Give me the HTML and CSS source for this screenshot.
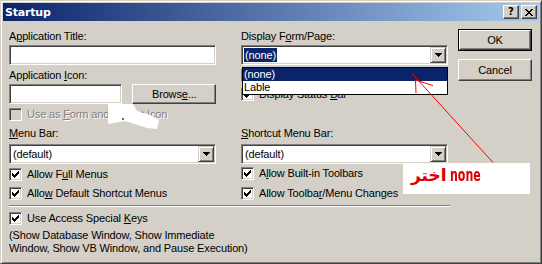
FILE: index.html
```html
<!DOCTYPE html>
<html>
<head>
<meta charset="utf-8">
<link rel="stylesheet" href="styles.css">
</head>
<body>
<div class="window">
  <div class="titlebar">
    <span class="title">Startup</span>
    <div class="tb-buttons">
      <span class="tb-btn tb-help">?</span>
      <span class="tb-btn"><svg width="8" height="7" viewBox="0 0 8 7" shape-rendering="crispEdges"><path d="M0 0h2v1h-2z M6 0h2v1h-2z M1 1h2v1h-2z M5 1h2v1h-2z M2 2h4v1h-4z M3 3h2v1h-2z M2 4h4v1h-4z M1 5h2v1h-2z M5 5h2v1h-2z M0 6h2v1h-2z M6 6h2v1h-2z" fill="#000"/></svg></span>
    </div>
  </div>
  <div class="client">
    <div class="main">
      <div class="cols">
        <div class="col">
          <div class="lbl">A<u>p</u>plication Title:</div>
          <div class="textbox mt2"></div>
          <div class="lbl mt4">Application <u>I</u>con:</div>
          <div class="iconrow mt2">
            <div class="textbox icon"></div>
            <div class="btn browse">Brows<u>e</u>...</div>
          </div>
          <div class="check disabled mt4"><span class="box"></span><span class="ctext">Use as <u>F</u>orm and Report Icon</span></div>
          <div class="lbl mt6"><u>M</u>enu Bar:</div>
          <div class="combo mt4"><span class="ctext-val">(default)</span><span class="dd"><svg width="7" height="4" viewBox="0 0 7 4" shape-rendering="crispEdges"><path d="M0 0h7v1h-1v1h-1v1h-1v1h-1v-1h-1v-1h-1v-1h-1z"/></svg></span></div>
          <div class="check mt4"><span class="box"><svg class="tick" width="7" height="7" viewBox="0 0 7 7" shape-rendering="crispEdges"><path d="M0 2h1v1h1v1h1v-1h1v-1h1v-1h1v-1h1v3h-1v1h-1v1h-1v1h-1v1h-1v-1h-1v-1h-1v-1h-1z"/></svg></span><span class="ctext">Allow F<u>u</u>ll Menus</span></div>
          <div class="check mt6"><span class="box"><svg class="tick" width="7" height="7" viewBox="0 0 7 7" shape-rendering="crispEdges"><path d="M0 2h1v1h1v1h1v-1h1v-1h1v-1h1v-1h1v3h-1v1h-1v1h-1v1h-1v1h-1v-1h-1v-1h-1v-1h-1z"/></svg></span><span class="ctext">Allo<u>w</u> Default Shortcut Menus</span></div>
        </div>
        <div class="col">
          <div class="lbl">Display F<u>o</u>rm/Page:</div>
          <div class="combo-wrap mt2">
            <div class="combo"><span class="ctext-val sel">(none)</span><span class="dd"><svg width="7" height="4" viewBox="0 0 7 4" shape-rendering="crispEdges"><path d="M0 0h7v1h-1v1h-1v1h-1v1h-1v-1h-1v-1h-1v-1h-1z"/></svg></span></div>
            <div class="dropdown">
              <div class="item selected">(none)</div>
              <div class="item">Lable</div>
            </div>
          </div>
          <div class="check mt4"><span class="box"></span><span class="ctext covered"><u>D</u>isplay Database Window</span></div>
          <div class="check mt6"><span class="box"><svg class="tick" width="7" height="7" viewBox="0 0 7 7" shape-rendering="crispEdges"><path d="M0 2h1v1h1v1h1v-1h1v-1h1v-1h1v-1h1v3h-1v1h-1v1h-1v1h-1v1h-1v-1h-1v-1h-1v-1h-1z"/></svg></span><span class="ctext">Display Status <u>B</u>ar</span></div>
          <div class="lbl mt26"><u>S</u>hortcut Menu Bar:</div>
          <div class="combo mt4"><span class="ctext-val">(default)</span><span class="dd"><svg width="7" height="4" viewBox="0 0 7 4" shape-rendering="crispEdges"><path d="M0 0h7v1h-1v1h-1v1h-1v1h-1v-1h-1v-1h-1v-1h-1z"/></svg></span></div>
          <div class="check mt3"><span class="box"><svg class="tick" width="7" height="7" viewBox="0 0 7 7" shape-rendering="crispEdges"><path d="M0 2h1v1h1v1h1v-1h1v-1h1v-1h1v-1h1v3h-1v1h-1v1h-1v1h-1v1h-1v-1h-1v-1h-1v-1h-1z"/></svg></span><span class="ctext">A<u>l</u>low Built-in Toolbars</span></div>
          <div class="check mt7"><span class="box"><svg class="tick" width="7" height="7" viewBox="0 0 7 7" shape-rendering="crispEdges"><path d="M0 2h1v1h1v1h1v-1h1v-1h1v-1h1v-1h1v3h-1v1h-1v1h-1v1h-1v1h-1v-1h-1v-1h-1v-1h-1z"/></svg></span><span class="ctext">Allow Toolba<u>r</u>/Menu Changes</span></div>
        </div>
      </div>
      <div class="divider"></div>
      <div class="check mt5"><span class="box"><svg class="tick" width="7" height="7" viewBox="0 0 7 7" shape-rendering="crispEdges"><path d="M0 2h1v1h1v1h1v-1h1v-1h1v-1h1v-1h1v3h-1v1h-1v1h-1v1h-1v1h-1v-1h-1v-1h-1v-1h-1z"/></svg></span><span class="ctext">Use Access Special <u>K</u>eys</span></div>
      <div class="note-text mt4">(Show Database Window, Show Immediate<br>Window, Show VB Window, and Pause Execution)</div>
    </div>
    <div class="buttons">
      <div class="btn default"><span class="inner">OK</span></div>
      <div class="btn">Cancel</div>
    </div>
  </div>
  <svg class="overlay" width="542" height="264" viewBox="0 0 542 264">
    <polygon points="108,104 133,104 137,111 150,115 159,120 157,129 147,128 125,121 108,124" fill="#fff"/>
    <rect x="122" y="118" width="2" height="2" fill="#6a6a6a"/>
    <g stroke="#f00" stroke-width="1" fill="none">
      <line x1="412" y1="73.5" x2="493" y2="162.5"/>
      <line x1="415.5" y1="80" x2="433" y2="85.5"/>
      <line x1="415.5" y1="80" x2="416" y2="93"/>
    </g>
  </svg>
  <div class="callout"><span class="ar">اختر</span><span class="en">none</span></div>
</div>
</body>
</html>
```

FILE: styles.css
```css
* { box-sizing: border-box; }
html, body { margin: 0; padding: 0; }
body {
  width: 542px;
  height: 264px;
  overflow: hidden;
  background: #d4d0c8;
  font-family: "Liberation Sans", Arial, sans-serif;
  font-size: 11px;
  letter-spacing: -0.15px;
  color: #000;
}
u { text-decoration: underline; text-underline-offset: 1px; }

.window {
  position: relative;
  width: 542px;
  height: 264px;
  border: 1px solid;
  border-color: #d4d0c8 #404040 #404040 #d4d0c8;
  box-shadow: inset 1px 1px #fff, inset -1px -1px #808080;
  padding: 2px;
  background: #d4d0c8;
}

.titlebar {
  height: 18px;
  display: flex;
  align-items: center;
  justify-content: space-between;
  background: linear-gradient(to right, #0a246a, #a6caf0);
  padding: 0 2px 0 2px;
}
.title {
  color: #fff;
  font-family: "DejaVu Sans", sans-serif;
  font-weight: bold;
  font-size: 11px;
  letter-spacing: -0.2px;
}
.tb-buttons { display: flex; gap: 2px; }
.tb-btn {
  width: 16px;
  height: 14px;
  background: #d4d0c8;
  border: 1px solid;
  border-color: #fff #404040 #404040 #fff;
  box-shadow: inset -1px -1px #808080;
  display: flex;
  align-items: center;
  justify-content: center;
}
.tb-help {
  font-family: "DejaVu Sans", sans-serif;
  font-weight: bold;
  font-size: 10px;
  line-height: 12px;
  letter-spacing: 0;
}

.client {
  display: flex;
  padding: 8px 0 0 6px;
}
.main {
  width: 441px;
  padding-top: 1px;
  display: flex;
  flex-direction: column;
}
.cols { display: flex; gap: 25px; }
.col { width: 207px; display: flex; flex-direction: column; }

.mt2 { margin-top: 2px; }
.mt3 { margin-top: 3px; }
.mt4 { margin-top: 4px; }
.mt5 { margin-top: 5px; }
.mt6 { margin-top: 6px; }
.mt7 { margin-top: 7px; }
.mt26 { margin-top: 26px; }

.lbl { height: 13px; line-height: 13px; white-space: nowrap; }

.textbox {
  height: 20px;
  background: #fff;
  border: 1px solid;
  border-color: #808080 #fff #fff #808080;
  box-shadow: inset 1px 1px #404040, inset -1px -1px #d4d0c8;
}
.textbox.icon { width: 114px; }

.iconrow { display: flex; gap: 10px; height: 20px; }

.btn {
  background: #d4d0c8;
  border: 1px solid;
  border-color: #fff #404040 #404040 #fff;
  box-shadow: inset -1px -1px #808080;
  display: flex;
  align-items: center;
  justify-content: center;
  white-space: nowrap;
}
.browse { width: 84px; height: 20px; }

.buttons {
  display: flex;
  flex-direction: column;
  gap: 8px;
  margin-left: 8px;
  width: 74px;
}
.buttons .btn { height: 22px; }
.btn.default {
  border: 1px solid #000;
  box-shadow: none;
  padding: 0;
}
.btn.default .inner {
  width: 100%;
  height: 100%;
  display: flex;
  align-items: center;
  justify-content: center;
  border: 1px solid;
  border-color: #fff #404040 #404040 #fff;
  box-shadow: inset -1px -1px #808080;
}

.combo-wrap { position: relative; }
.combo {
  height: 20px;
  background: #fff;
  border: 1px solid;
  border-color: #808080 #fff #fff #808080;
  box-shadow: inset 1px 1px #404040, inset -1px -1px #d4d0c8;
  display: flex;
  align-items: center;
  justify-content: space-between;
  padding: 1px 1px 1px 2px;
}
.ctext-val { line-height: 14px; padding: 0 1px; }
.ctext-val.sel { background: #0a246a; color: #fff; }
.dd {
  width: 16px;
  height: 16px;
  background: #d4d0c8;
  border: 1px solid;
  border-color: #d4d0c8 #404040 #404040 #d4d0c8;
  box-shadow: inset 1px 1px #fff, inset -1px -1px #808080;
  display: flex;
  align-items: center;
  justify-content: center;
}
.dd svg { fill: #000; }

.dropdown {
  position: absolute;
  left: 1px;
  top: 22px;
  width: 206px;
  border: 1px solid #000;
  background: #fff;
  z-index: 2;
}
.dropdown .item { height: 13px; line-height: 13px; padding-left: 1px; }
.dropdown .item.selected { background: #0a246a; color: #fff; }

.check {
  display: flex;
  align-items: center;
  height: 13px;
  gap: 5px;
  white-space: nowrap;
}
.check .box {
  width: 13px;
  height: 13px;
  flex: none;
  background: #fff;
  border: 1px solid;
  border-color: #808080 #fff #fff #808080;
  box-shadow: inset 1px 1px #404040, inset -1px -1px #d4d0c8;
  display: flex;
  align-items: center;
  justify-content: center;
}
.tick { fill: #000; display: block; }
.check .ctext { line-height: 13px; }
.check .ctext.covered { visibility: hidden; }
.check.disabled .box { background: #d4d0c8; }
.check.disabled .ctext { color: #808080; text-shadow: 1px 1px #fff; }

.divider {
  margin-top: 5px;
  height: 2px;
  border-top: 1px solid #808080;
  border-bottom: 1px solid #fff;
}

.note-text { line-height: 13px; }

.overlay {
  position: absolute;
  left: -1px;
  top: -1px;
  z-index: 3;
  pointer-events: none;
}

.callout {
  position: absolute;
  left: 402px;
  top: 162px;
  width: 127px;
  height: 31px;
  background: #fff;
  z-index: 3;
  padding: 2px 0 0 8px;
  display: flex;
  align-items: baseline;
  gap: 3px;
  color: #e00000;
  font-weight: bold;
  line-height: 20px;
  letter-spacing: 0;
  white-space: nowrap;
}
.callout .ar {
  font-family: "DejaVu Sans", sans-serif;
  font-size: 17px;
}
.callout .en {
  display: inline-block;
  font-family: "DejaVu Sans Condensed", "DejaVu Sans", sans-serif;
  font-size: 17px;
  transform: scaleX(0.72);
  transform-origin: left center;
}
```
